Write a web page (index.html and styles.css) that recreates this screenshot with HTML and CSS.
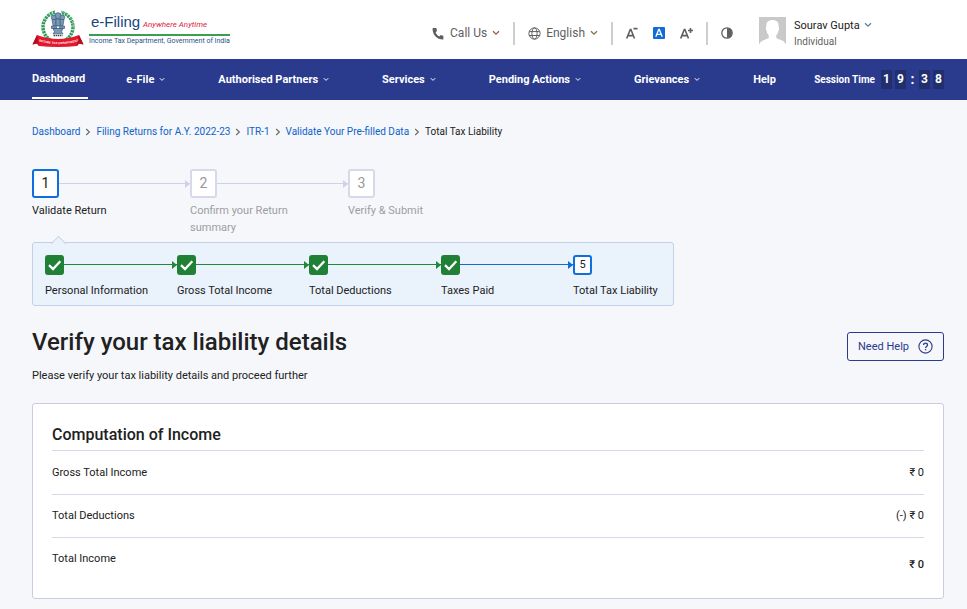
FILE: index.html
```html
<!DOCTYPE html>
<html lang="en">
<head>
<meta charset="utf-8">
<meta name="viewport" content="width=device-width, initial-scale=1">
<title>e-Filing - Total Tax Liability</title>
<link rel="stylesheet" href="styles.css">
</head>
<body>
<svg width="0" height="0" class="sprite" aria-hidden="true">
  <symbol id="chevron" viewBox="0 0 8 6"><path d="M1 1.2 4 4.2 7 1.2" fill="none" stroke="currentColor" stroke-width="1.3"/></symbol>
  <symbol id="next" viewBox="0 0 6 8"><path d="M1.2 1 4.4 4 1.2 7" fill="none" stroke="currentColor" stroke-width="1.1"/></symbol>
  <symbol id="check" viewBox="0 0 20 20"><path d="M4 10.2 8 14 15.3 6.3" fill="none" stroke="#fff" stroke-width="2.3"/></symbol>
</svg>

<header class="top">
  <a class="logo" href="#">
    <svg class="emblem" width="52" height="38" viewBox="0 0 52 38" aria-hidden="true">
      <circle cx="26" cy="17" r="15" fill="none" stroke="#2c9a56" stroke-width="3.400" stroke-dasharray="2.4 .7"/>
      <circle cx="26" cy="17" r="15.4" fill="none" stroke="#a9d8b8" stroke-width="1" stroke-dasharray="1 2.1"/>
      <path d="M23 0h6v3.500h-6z" fill="#fff"/>
      <g fill="#7d98b2" stroke="#345b80" stroke-width=".7">
        <circle cx="26" cy="6" r="3.300"/>
        <circle cx="21.700" cy="7.500" r="2.400"/>
        <circle cx="30.300" cy="7.500" r="2.400"/>
        <path d="M20 9.500h3.500v6H21zM24.200 9h3.600v7h-3.600zM28.500 9.500H32l-1 6h-2.500z"/>
        <path d="M19.500 16h13v2.400h-13zM21 18.400h10l-1.500 3.400 1.500 2H21l1.500-2z"/>
      </g>
      <circle cx="26" cy="17.200" r="1" fill="#fff"/>
      <path d="M21.500 25.500h9" stroke="#454545" stroke-width="1.600" stroke-dasharray="1.500 .6"/>
      <path d="M5 25Q26 33 47 25L51.500 34.500 47 33.500 45 36Q26 38 7 36L5 33.500.500 34.500z" fill="#e4172c"/>
      <path d="M5 25 7 36 5 33.500.500 34.500zM47 25 45 36l2-2.500 4.500 1z" fill="#b30d20"/>
      <path id="ribbon" d="M7 31.300Q26 37 47 31.300" fill="none"/>
      <text class="ribbon-text"><textPath href="#ribbon">INCOME TAX DEPARTMENT</textPath></text>
    </svg>
    <span class="wordmark">
      <span class="brand"><span class="brand-name">e-Filing</span> <em class="brand-motto">Anywhere Anytime</em></span>
      <span class="brand-dept">Income Tax Department, Government of India</span>
    </span>
  </a>

  <div class="tools">
    <button class="tool" type="button">
      <svg width="13" height="13" viewBox="0 0 24 24" aria-hidden="true"><path fill="currentColor" d="M6.600 10.800c1.400 2.800 3.800 5.100 6.600 6.600l2.200-2.200c.3-.3.700-.4 1-.2 1.100.4 2.300.6 3.600.6.600 0 1 .4 1 1V22c0 .6-.4 1-1 1C9.600 23 1 14.400 1 3c0-.6.400-1 1-1h5.500c.6 0 1 .4 1 1 0 1.200.2 2.400.6 3.600.1.300 0 .7-.2 1z"/></svg>
      <span>Call Us</span>
      <svg class="chev brown" width="8" height="6" aria-hidden="true"><use href="#chevron"/></svg>
    </button>
    <span class="bar"></span>
    <button class="tool" type="button">
      <svg width="13" height="13" viewBox="0 0 13 13" fill="none" stroke="currentColor" aria-hidden="true"><circle cx="6.500" cy="6.500" r="5.600"/><ellipse cx="6.500" cy="6.500" rx="2.600" ry="5.600"/><path d="M1.300 4.600h10.400M1.300 8.500h10.400"/></svg>
      <span>English</span>
      <svg class="chev olive" width="8" height="6" aria-hidden="true"><use href="#chevron"/></svg>
    </button>
    <span class="bar"></span>
    <div class="sizes">
      <button class="size" type="button" aria-label="Decrease text size"><svg width="12" height="13" viewBox="0 0 12 13" fill="none" stroke="currentColor" stroke-width="1.600"><path d="M.7 11.500 4.300 2.500h.6l3.600 9M2 8.600h5.200M7.500 1.600h4"/></svg></button>
      <button class="size" type="button" aria-label="Default text size"><svg width="12" height="12" viewBox="0 0 12 12"><rect width="12" height="12" rx="1" fill="#0f6cd8"/><path d="M2.800 9.700 5.700 2.500h.6l2.900 7.200M3.900 7.400h4.200" fill="none" stroke="#fff" stroke-width="1.300"/></svg></button>
      <button class="size" type="button" aria-label="Increase text size"><svg width="13" height="13" viewBox="0 0 13 13" fill="none" stroke="currentColor" stroke-width="1.600"><path d="M.7 11.500 4.300 2.500h.6l3.600 9M2 8.600h5.200M8 3.500h5M10.500 1v5"/></svg></button>
    </div>
    <span class="bar"></span>
    <button class="size" type="button" aria-label="Contrast"><svg width="12" height="12" viewBox="0 0 12 12"><circle cx="6" cy="6" r="5.200" fill="#fff" stroke="#5f5f5f" stroke-width="1.300"/><path d="M6 1a5 5 0 0 1 0 10z" fill="#5f5f5f"/></svg></button>
    <div class="user">
      <svg width="27" height="27" viewBox="0 0 27 27" aria-hidden="true"><path fill="#c9c9c9" d="M0 0h27v27h-.500c-1-3.500-5-4-8.500-5.500-1.200-.6-1-2.500-.3-4 1.200-1 1.500-2.500 1.700-4 1-.8 1-2.500.3-3.200C20 5.500 18 3 13.500 3S7 5.500 7.300 10.300c-.7.700-.7 2.400.3 3.200.2 1.500.5 3 1.700 4 .7 1.500.9 3.400-.3 4C5.500 23 1.500 23.500.500 27H0z"/></svg>
      <div class="user-info">
        <button class="user-name" type="button">Sourav Gupta <svg class="chev" width="8" height="6" aria-hidden="true"><use href="#chevron"/></svg></button>
        <span class="user-type">Individual</span>
      </div>
    </div>
  </div>
</header>

<nav class="nav" aria-label="Main">
  <ul class="menu">
    <li><a class="active" href="#">Dashboard</a></li>
    <li class="drop"><a href="#">e-File <svg width="6" height="5" aria-hidden="true"><use href="#chevron"/></svg></a></li>
    <li class="drop"><a href="#">Authorised Partners <svg width="6" height="5" aria-hidden="true"><use href="#chevron"/></svg></a></li>
    <li class="drop"><a href="#">Services <svg width="6" height="5" aria-hidden="true"><use href="#chevron"/></svg></a></li>
    <li class="drop"><a href="#">Pending Actions <svg width="6" height="5" aria-hidden="true"><use href="#chevron"/></svg></a></li>
    <li class="drop"><a href="#">Grievances <svg width="6" height="5" aria-hidden="true"><use href="#chevron"/></svg></a></li>
    <li><a href="#">Help</a></li>
  </ul>
  <div class="session">
    <span class="session-label">Session Time</span>
    <span class="digit">1</span><span class="digit">9</span><span class="colon">:</span><span class="digit">3</span><span class="digit">8</span>
  </div>
</nav>

<main class="page">
  <nav class="crumbs" aria-label="Breadcrumb">
    <a href="#">Dashboard</a><svg width="6" height="8"><use href="#next"/></svg>
    <a href="#">Filing Returns for A.Y. 2022-23</a><svg width="6" height="8"><use href="#next"/></svg>
    <a href="#">ITR-1</a><svg width="6" height="8"><use href="#next"/></svg>
    <a href="#">Validate Your Pre-filled Data</a><svg width="6" height="8"><use href="#next"/></svg>
    <span class="here">Total Tax Liability</span>
  </nav>

  <ol class="steps">
    <li class="step current"><div class="track"><span class="num">1</span><span class="line"></span></div><span class="step-label">Validate Return</span></li>
    <li class="step"><div class="track"><span class="num">2</span><span class="line"></span></div><span class="step-label">Confirm your Return summary</span></li>
    <li class="step"><div class="track"><span class="num">3</span></div><span class="step-label">Verify &amp; Submit</span></li>
  </ol>

  <ol class="substeps">
    <li class="sub done"><div class="track"><span class="mark"><svg width="20" height="20"><use href="#check"/></svg></span><span class="line"></span></div><span>Personal Information</span></li>
    <li class="sub done"><div class="track"><span class="mark"><svg width="20" height="20"><use href="#check"/></svg></span><span class="line"></span></div><span>Gross Total Income</span></li>
    <li class="sub done"><div class="track"><span class="mark"><svg width="20" height="20"><use href="#check"/></svg></span><span class="line"></span></div><span>Total Deductions</span></li>
    <li class="sub done latest"><div class="track"><span class="mark"><svg width="20" height="20"><use href="#check"/></svg></span><span class="line"></span></div><span>Taxes Paid</span></li>
    <li class="sub"><div class="track"><span class="mark">5</span></div><span>Total Tax Liability</span></li>
  </ol>

  <div class="title-row">
    <h1>Verify your tax liability details</h1>
    <button class="help" type="button">Need Help
      <svg width="15" height="15" viewBox="0 0 15 15" fill="none" stroke="currentColor" aria-hidden="true"><circle cx="7.500" cy="7.500" r="6.600" stroke-width="1.100"/><path d="M5.600 6c0-2.600 3.900-2.500 3.900-.1 0 1.500-1.900 1.500-1.900 3M7.600 9.900v1.300" stroke-width="1.300"/></svg>
    </button>
  </div>
  <p class="lead">Please verify your tax liability details and proceed further</p>

  <section class="card">
    <h2 id="income">Computation of Income</h2>
    <table aria-labelledby="income">
      <tbody>
        <tr><th scope="row">Gross Total Income</th><td>₹ 0</td></tr>
        <tr><th scope="row">Total Deductions</th><td>(-) ₹ 0</td></tr>
        <tr class="total"><th scope="row">Total Income</th><td>₹ 0</td></tr>
      </tbody>
    </table>
  </section>
</main>
</body>
</html>
```
FILE: styles.css
```css
* { box-sizing: border-box; }

body {
  margin: 0;
  background: #f5f7fb;
  color: #212121;
  font: 11px/17px Roboto, "Liberation Sans", sans-serif;
}

button {
  margin: 0;
  padding: 0;
  border: 0;
  background: none;
  color: inherit;
  font: inherit;
  cursor: pointer;
}

a { color: inherit; text-decoration: none; }
svg { display: block; flex: none; }
ol, ul { margin: 0; padding: 0; list-style: none; }
.sprite { position: absolute; }

/* Top bar */
.top {
  display: flex;
  justify-content: space-between;
  height: 59px;
  padding: 0 23px 0 32px;
  background: #fff;
}

.logo {
  display: flex;
  align-items: flex-start;
  gap: 5px;
  padding-top: 10px;
}

.emblem { overflow: visible; }
.ribbon-text { fill: #fff; font: bold 3px "Liberation Sans", sans-serif; }

.wordmark {
  display: flex;
  flex-direction: column;
  padding-top: 3px;
  white-space: nowrap;
}

.brand { padding-left: 2px; border-bottom: 2px solid #3c9e50; line-height: 18px; }
.brand-name { color: #17457f; font: 15px/18px "Liberation Sans", sans-serif; }
.brand-motto { color: #e0203a; font-size: 8px; }
.brand-dept { color: #1f5288; font-size: 7px; line-height: 10px; }

.tools {
  display: flex;
  align-items: center;
  gap: 13px;
  padding-top: 7px;
  color: #5f5f5f;
}

.tool { display: flex; align-items: center; gap: 5px; font-size: 12px; }
.brown { color: #9a5b4c; }
.olive { color: #82704c; }
.bar { width: 2px; height: 23px; background: #cecece; }
.sizes { display: flex; align-items: center; gap: 15px; }
.size svg { color: #5f5f5f; }

.user {
  display: flex;
  gap: 8px;
  width: 185px;
  margin-left: 13px;
}

.user-info { display: flex; flex-direction: column; }
.user-name { display: flex; align-items: center; gap: 4px; color: #212121; }
.user-name .chev { color: #5b8299; }
.user-type { font-size: 10px; line-height: 16px; text-align: left; }

/* Main menu */
.nav {
  display: flex;
  align-items: center;
  justify-content: space-between;
  height: 41px;
  padding: 0 23px 0 32px;
  background: #2a3a8c;
  color: #fff;
  font-weight: 700;
  white-space: nowrap;
}

.menu { display: flex; gap: 38px; }
.drop { padding-right: 15px; }
.menu a { display: flex; align-items: center; gap: 5px; height: 39px; }
.menu .active { padding-right: 3px; border-bottom: 2px solid #fff; }

.session { display: flex; align-items: center; gap: 3px; font-size: 12px; }
.session-label { margin-right: 3px; font-size: 10px; }
.digit { width: 11px; background: #222f6e; line-height: 19px; text-align: center; }
.colon { width: 7px; font-size: 14px; text-align: center; }

/* Page */
.page { padding: 23px 23px 10px 32px; }

.crumbs { display: flex; align-items: center; gap: 5px; font-size: 10px; }
.crumbs a { color: #0f62c9; }
.crumbs svg { color: #666; }

.track { display: flex; align-items: center; }
.line { position: relative; flex: 1; height: 2px; border-top: 1px solid; }

.line::after {
  content: "";
  position: absolute;
  top: -4px;
  right: 0;
  border: solid transparent;
  border-width: 4px 0 4px 5px;
  border-left-color: currentColor;
}

.steps { display: flex; margin-top: 29px; }
.step { flex: 0 0 158px; color: #cfd0ea; }

.num {
  width: 27px;
  height: 29px;
  border: 2px solid #d8d8ea;
  border-radius: 3px;
  background: #fff;
  color: #999;
  font-size: 14px;
  line-height: 25px;
  text-align: center;
}

.step-label { display: block; max-width: 120px; margin-top: 4px; color: #9e9e9e; }
.current .num { border-color: #0f6fdc; color: #212121; }
.current .step-label { color: #212121; }

.substeps {
  position: relative;
  display: flex;
  width: fit-content;
  margin-top: 6px;
  padding: 12px 15px 6px 12px;
  border: 1px solid #c6cfea;
  border-radius: 3px;
  background: #eaf2fc;
}

.substeps::before {
  content: "";
  position: absolute;
  top: -5px;
  left: 20px;
  width: 10px;
  height: 10px;
  border: solid #c9d3e9;
  border-width: 1px 0 0 1px;
  background: linear-gradient(135deg, #eaf2fc 50%, transparent 50%);
  transform: rotate(45deg);
}

.sub { width: 132px; color: #212121; white-space: nowrap; }
.sub:last-child { width: auto; }
.sub .track { margin-bottom: 7px; }
.sub .line { color: #218838; }
.sub.latest .line { color: #0f6fce; }

.mark {
  width: 19px;
  height: 20px;
  border: 2px solid #0f6fdc;
  border-radius: 3px;
  background: #fff;
  line-height: 16px;
  text-align: center;
}

.done .mark { overflow: hidden; border: 0; background: #208036; }

.title-row {
  display: flex;
  align-items: flex-start;
  justify-content: space-between;
  margin-top: 20px;
}

h1 { margin: 0; font-size: 24px; font-weight: 500; line-height: 32px; }

.help {
  display: flex;
  align-items: center;
  gap: 9px;
  height: 29px;
  margin-top: 6px;
  padding: 0 10px;
  border: 1px solid #2a3a8c;
  border-radius: 3px;
  color: #2a3a8c;
}

.lead { margin: 6px 0 19px; }

.card {
  padding: 20px 19px 18px;
  border: 1px solid #cbcce2;
  border-radius: 3px;
  background: #fff;
}

h2 {
  margin: 0;
  padding-bottom: 5px;
  border-bottom: 1px solid #d8d8e8;
  font-size: 16px;
  font-weight: 500;
  line-height: 21px;
}

table { width: 100%; border-collapse: collapse; }
th, td { height: 43px; padding: 0; border-bottom: 1px solid #d8d8e8; font-weight: 400; }
th { text-align: left; }
td { text-align: right; }
.total th, .total td { border: 0; }
.total td { padding-top: 12px; font-weight: 500; }
```
